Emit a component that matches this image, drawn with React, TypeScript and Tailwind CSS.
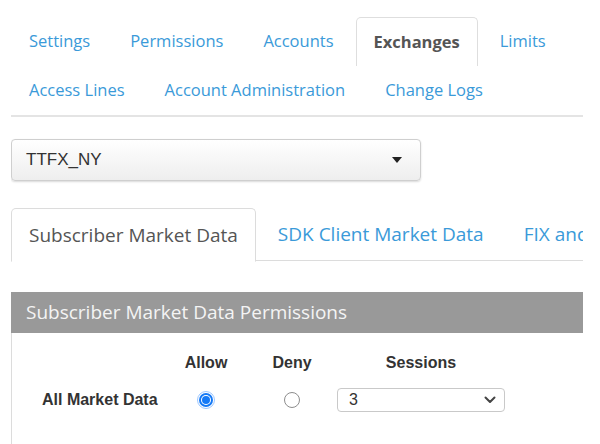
import { useState } from "react";

const mainTabs = [
  ["Settings", "Permissions", "Accounts", "Exchanges", "Limits"],
  ["Access Lines", "Account Administration", "Change Logs"],
];

const dataTabs = ["Subscriber Market Data", "SDK Client Market Data", "FIX and API Market Data"];

function Radio({ checked }: { checked: boolean }) {
  if (checked) {
    return (
      <span className="flex h-[18px] w-[18px] items-center justify-center rounded-full border-[1.5px] border-[#9cc7ff]">
        <span className="flex h-[14px] w-[14px] items-center justify-center rounded-full bg-[#1479f6]">
          <span className="flex h-[10px] w-[10px] items-center justify-center rounded-full bg-white">
            <span className="h-[8px] w-[8px] rounded-full bg-[#1479f6]" />
          </span>
        </span>
      </span>
    );
  }
  return <span className="block h-[16px] w-[16px] rounded-full border-[1.5px] border-[#8d8d8d] bg-white" />;
}

export default function App() {
  const [tab, setTab] = useState("Exchanges");
  const [dataTab, setDataTab] = useState(dataTabs[0]);
  const [allow, setAllow] = useState(true);

  return (
    <div className="h-[444px] w-[600px] overflow-hidden bg-white">
      <div className="ml-[11px] w-[572px] overflow-hidden font-['Open_Sans',sans-serif]">
        {/* top navigation tabs */}
        <div className="mt-[17px] border-b-2 border-[#e4e4e4]">
          {mainTabs.map((row, i) => (
            <div key={i} className="flex h-[49px] whitespace-nowrap">
              {row.map(name => (
                <button
                  key={name}
                  onClick={() => setTab(name)}
                  className={
                    name === tab
                      ? "mr-[4px] h-[49px] shrink-0 rounded-t-[5px] border border-b-0 border-[#dedede] px-[17px] text-[16.5px] font-bold text-[#555]"
                      : "mr-[4px] h-[49px] shrink-0 border border-transparent px-[17px] text-[16.5px] text-[#3a9ad9]"
                  }>
                  {name}
                </button>
              ))}
            </div>
          ))}
        </div>

        {/* exchange picker */}
        <div className="mt-[22px] flex h-[42px] w-[410px] items-center justify-between rounded-[4px] border border-[#cfcfcf] bg-gradient-to-b from-white to-[#eeeeee] pl-[14px] pr-[18px] shadow-[0_1px_2px_rgba(0,0,0,0.15)]">
          <span className="font-['Liberation_Sans',sans-serif] text-[17px] text-[#333]">TTFX_NY</span>
          <svg width="10" height="6" viewBox="0 0 10 6">
            <path d="M0 0h10L5 6z" fill="#222" />
          </svg>
        </div>

        {/* market data tabs */}
        <div className="mt-[27px] flex h-[53px] whitespace-nowrap border-b border-[#dcdcdc]">
          {dataTabs.map(name => (
            <button
              key={name}
              onClick={() => setDataTab(name)}
              className={
                name === dataTab
                  ? "-mb-px mr-[4px] h-[54px] shrink-0 rounded-t-[5px] border border-b-white border-[#dcdcdc] bg-white px-[17px] text-[19px] text-[#555]"
                  : "mr-[4px] h-[53px] shrink-0 border border-transparent px-[17px] text-[19px] text-[#3a9ad9]"
              }>
              {name}
            </button>
          ))}
        </div>

        {/* permissions panel */}
        <div className="mt-[31px]">
          <div className="flex h-[41px] items-center bg-[#999999] px-[15px] text-[19px] text-[#f4f4f4]">
            Subscriber Market Data Permissions
          </div>
          <div className="h-[120px] border-l border-[#dcdcdc] pt-[19px] font-['Liberation_Sans',sans-serif] text-[#333]">
            <div className="flex h-[22px] items-center text-[16px] font-bold">
              <div className="w-[158px]" />
              <div className="w-[72px] text-center">Allow</div>
              <div className="ml-[5px] w-[90px] text-center">Deny</div>
              <div className="w-[168px] text-center">Sessions</div>
            </div>
            <div className="mt-[14px] flex h-[24px] items-center">
              <div className="w-[158px] pl-[30px] text-[16px] font-bold">All Market Data</div>
              <div className="flex w-[72px] justify-center">
                <button onClick={() => setAllow(true)}>
                  <Radio checked={allow} />
                </button>
              </div>
              <div className="ml-[5px] flex w-[90px] justify-center">
                <button onClick={() => setAllow(false)}>
                  <Radio checked={!allow} />
                </button>
              </div>
              <div className="flex h-[24px] w-[168px] items-center justify-between rounded-[4px] border border-[#c9c9c9] bg-white pl-[11px] pr-[8px]">
                <span className="text-[16px]">3</span>
                <svg width="12" height="8" viewBox="0 0 12 8">
                  <path d="M1.5 1.5 6 6l4.5-4.5" fill="none" stroke="#444" strokeWidth="2" strokeLinecap="round" strokeLinejoin="round" />
                </svg>
              </div>
            </div>
          </div>
        </div>
      </div>
    </div>
  );
}
